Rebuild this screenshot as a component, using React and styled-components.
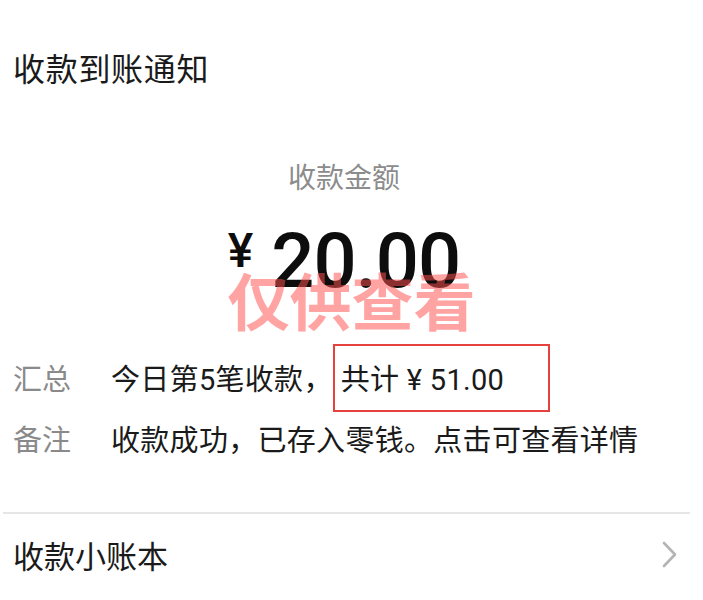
import React from "react";
import styled, { createGlobalStyle } from "styled-components";

const GlobalStyle = createGlobalStyle`
  html, body {
    margin: 0;
    padding: 0;
    background: #ffffff;
  }
  body {
    font-family: "Noto Sans CJK SC", "Noto Sans", sans-serif;
    color: #1a1a1a;
  }
`;

const Page = styled.div`
  position: relative;
  width: 703px;
  height: 600px;
  overflow: hidden;
  background: #ffffff;
`;

const Title = styled.h1`
  margin: 47px 0 0 13px;
  font-size: 32px;
  font-weight: 400;
  line-height: 40px;
  letter-spacing: 0.7px;
  color: #1a1a1a;
`;

const Center = styled.div`
  display: flex;
  flex-direction: column;
  align-items: center;
  padding-right: 15px;
`;

const Caption = styled.div`
  margin-top: 69px;
  font-size: 28px;
  line-height: 40px;
  color: #8c8c8c;
`;

const AmountRow = styled.div`
  display: flex;
  align-items: flex-start;
  margin-top: 27px;
  font-family: Roboto, "Liberation Sans", sans-serif;
  font-weight: 500;
  color: #0d0d0d;
`;

const Yen = styled.span`
  margin-top: 4px;
  margin-right: 18px;
  font-size: 48px;
  line-height: 1;
`;

const Amount = styled.span`
  font-size: 76px;
  line-height: 1;
  letter-spacing: -1px;
`;

const Watermark = styled.div`
  position: absolute;
  top: 268px;
  left: 50%;
  transform: translateX(-50%);
  font-size: 62px;
  font-weight: 700;
  line-height: 62px;
  white-space: nowrap;
  color: rgba(255, 78, 78, 0.52);
  pointer-events: none;
`;

const Details = styled.div`
  display: grid;
  grid-template-columns: 98px 1fr;
  grid-auto-rows: 61px;
  margin-top: 51px;
  padding-left: 13px;
  font-family: Roboto, "Noto Sans CJK SC", sans-serif;
  font-size: 29px;
  line-height: 61px;
`;

const Label = styled.div`
  color: #8a8a8a;
`;

const Value = styled.div`
  color: #1a1a1a;
  white-space: nowrap;
  letter-spacing: 0.3px;
`;

const Marked = styled.span`
  padding: 17px 44px 13px 6px;
  border: 2px solid #e5423c;
`;

const Divider = styled.hr`
  margin: 40px 13px 0 3px;
  border: none;
  border-top: 2px solid #e6e6e6;
`;

const LinkRow = styled.div`
  display: flex;
  align-items: center;
  justify-content: space-between;
  margin-top: 20px;
  padding: 0 26px 0 13px;
  height: 40px;
  font-size: 31px;
  color: #1a1a1a;
`;

const Chevron = () => (
  <svg width="15" height="27" viewBox="0 0 15 27" fill="none">
    <polyline
      points="2,2 13,13.5 2,25"
      stroke="#b4b4b4"
      strokeWidth="2.6"
      strokeLinecap="round"
      strokeLinejoin="round"
    />
  </svg>
);

export default function App() {
  return (
    <Page>
      <GlobalStyle />
      <Title>收款到账通知</Title>
      <Center>
        <Caption>收款金额</Caption>
        <AmountRow>
          <Yen>¥</Yen>
          <Amount>20.00</Amount>
        </AmountRow>
      </Center>
      <Watermark>仅供查看</Watermark>
      <Details>
        <Label>汇总</Label>
        <Value>
          今日第5笔收款，<Marked>共计 ¥ 51.00</Marked>
        </Value>
        <Label>备注</Label>
        <Value>收款成功，已存入零钱。点击可查看详情</Value>
      </Details>
      <Divider />
      <LinkRow>
        <span>收款小账本</span>
        <Chevron />
      </LinkRow>
    </Page>
  );
}
